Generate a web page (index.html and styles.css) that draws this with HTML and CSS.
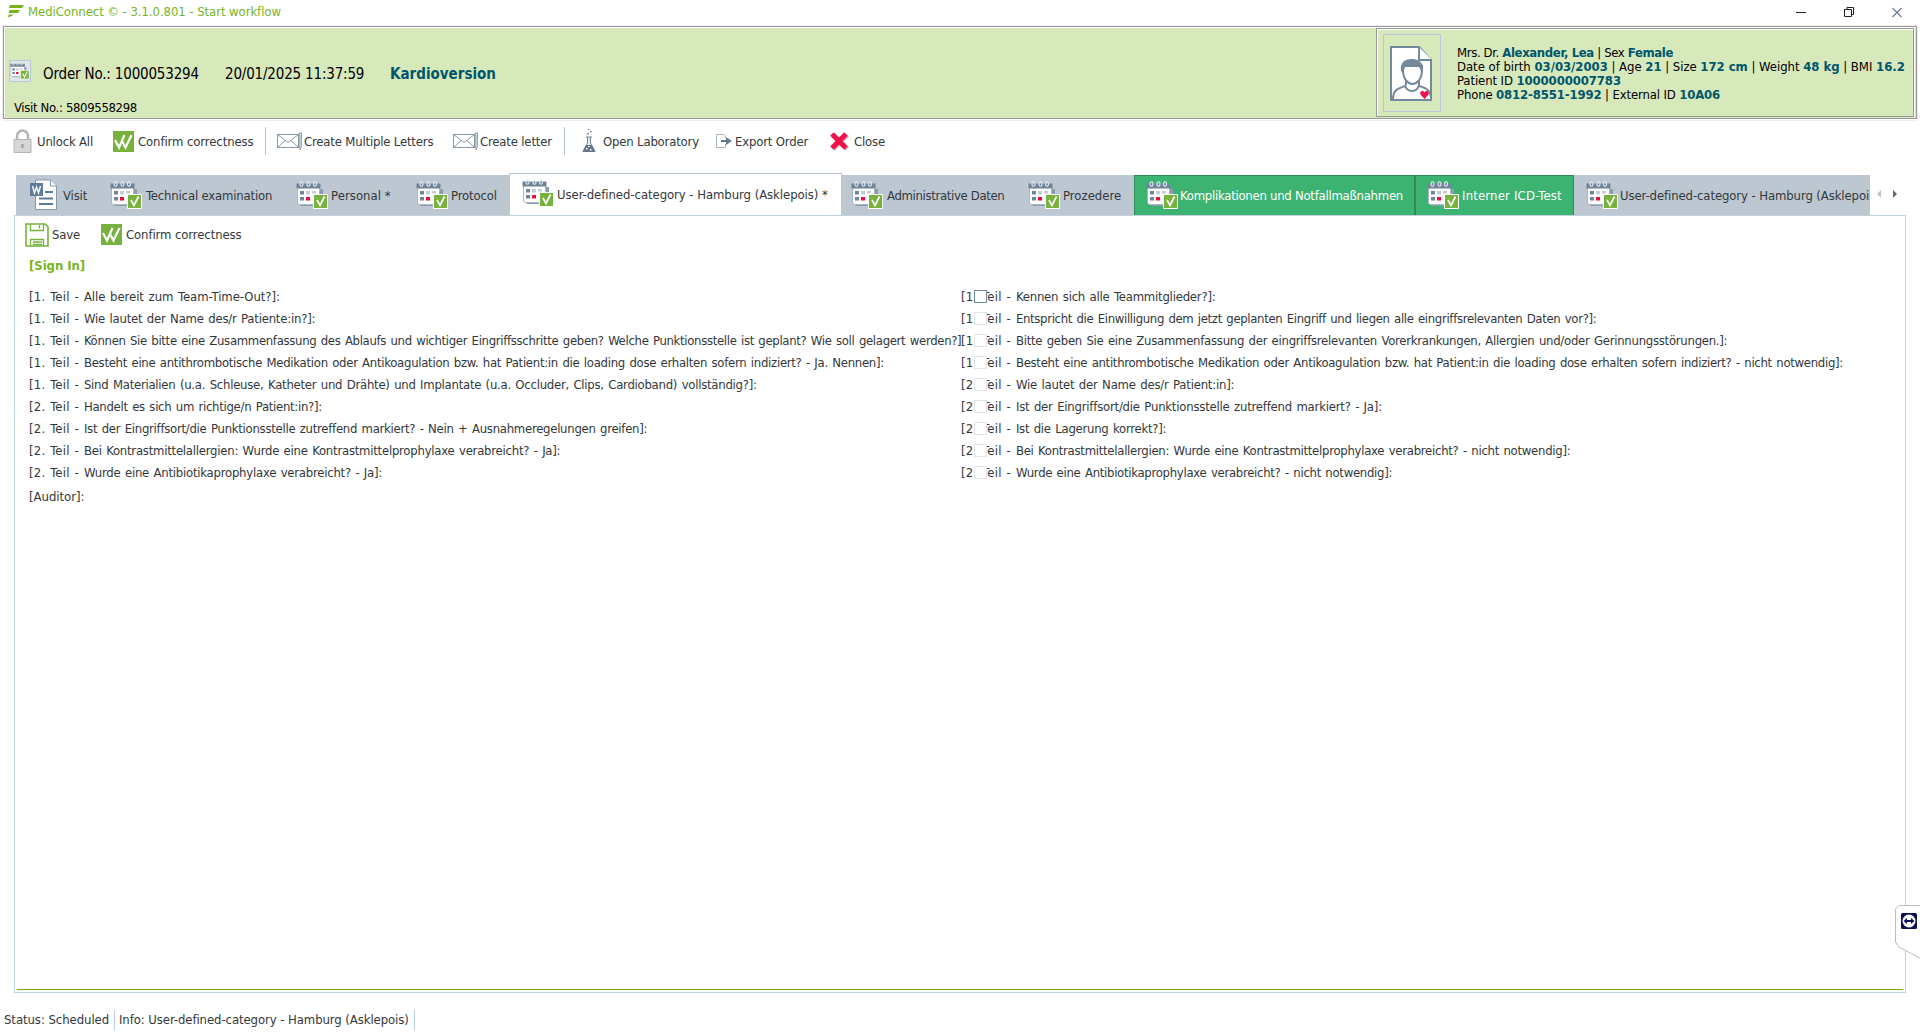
FILE: index.html
```html
<!DOCTYPE html>
<html lang="de">
<head>
<meta charset="utf-8">
<title>MediConnect</title>
<link rel="stylesheet" href="styles.css">
</head>
<body>
<svg class="defs" width="0" height="0">
  <symbol id="cal" viewBox="0 0 33 29">
    <path d="M4 8h23v14l-3 3H5l-3-3V8z" fill="#8b9cae"/>
    <path d="M1.500 5h22v17l-1.500 1.500H3L1.500 22z" fill="#fff" stroke="#a9b6c3"/>
    <path d="M.5 2.500h24v5H.5z" fill="#6f8399"/>
    <g fill="none" stroke="#e4e9ee" stroke-width="1.100"><ellipse cx="5.500" cy="3" rx="1.500" ry="2.200"/><ellipse cx="12.500" cy="3" rx="1.500" ry="2.200"/><ellipse cx="19" cy="3" rx="1.500" ry="2.200"/></g>
    <path d="M4 10h4v3.500H4zM4 16h4v3.500H4z" fill="#6f8399"/><path d="M10 10h4v3.500h-4zM16 10h4v2.500h-4z" fill="#c5ccd5"/><path d="M10 16h4v3.500h-4z" fill="#ee0a3c"/>
    <path d="M17.500 13.500h14v14h-14z" fill="#76b23c" stroke="#fff"/><path d="M21 19l3 5.500 4.500-9" fill="none" stroke="#fff" stroke-width="1.700"/>
  </symbol>
  <symbol id="ok" viewBox="0 0 21 21"><path d="M0 0h21v21H0z" fill="#76b23c"/><path d="M2 9l4 7.500L11.500 4M9 10l3.500 6.500L18.500 4" fill="none" stroke="#fff" stroke-width="2.200"/></symbol>
  <symbol id="mail" viewBox="0 0 25 19"><path d="M.5 2.500h21v13H.5zM.5 2.500l10.500 8 10.500-8M.5 15.500l7.500-7m6 0l7.500 7" fill="none" stroke="#8597a9"/><path d="M22 1h2.500v13L23.300 18 22 14z" fill="#c5d0db" stroke="#8597a9" stroke-width=".8"/></symbol>
</svg>

<header class="title">
  <svg class="logo" viewBox="0 0 16 13"><path d="M2 0h14l-2 3H1zM1.500 5H12l-2 3H.8zM.8 9.500H6L3.500 11 0 12.500z" fill="#76b41e"/></svg>
  <span class="caption">MediConnect © - 3.1.0.801 - Start workflow</span>
  <svg class="winbtns" viewBox="0 0 112 14"><path d="M3 7.500h10" stroke="#222"/><path d="M51.500 4.500h7v7h-7zM54 4.500v-2h6.500v7h-2" fill="none" stroke="#222"/><path d="M99.500 3l9 9m0-9l-9 9" stroke="#70839a" stroke-width="1.400"/></svg>
</header>

<section class="order">
  <div class="order-info">
    <div class="order-line">
      <span class="thumb"><svg viewBox="0 0 33 29"><use href="#cal"/></svg></span>
      <span class="big no">Order No.: 1000053294</span>
      <span class="big date">20/01/2025 11:37:59</span>
      <b class="kind">Kardioversion</b>
    </div>
    <div class="visit">Visit No.: 5809558298</div>
  </div>
  <div class="patient">
    <div class="photo"><svg viewBox="0 0 44 55"><path d="M1 1h28l12 13v40H1z" fill="#fff" stroke="#75899d" stroke-width="2"/><path d="M29 1v13h13" fill="#fff" stroke="#75899d" stroke-width="2"/><path d="M3 53c0-9 5-11 13-13v-5h13v5c8 2 12 5 12 13" fill="#fff" stroke="#75899d" stroke-width="2"/><path d="M15 39c2 8 12 8 14 0" fill="#fff" stroke="#75899d" stroke-width="2"/><path d="M13 24c0 9 5 14 9.500 14S32 33 32 24v-4H13z" fill="#fff" stroke="#75899d" stroke-width="2"/><path d="M11 25c-1-8 3-12 11-12s12 5 11 12l-2 3c0-4-1-6-3-8-5 1-8 1-12 0-2 2-2 5-3 8z" fill="#75899d"/><path d="M34.500 53l-4-4.500c-1.500-3 2.500-5 4-2 1.500-3 5.500-1 4 2z" fill="#f0124a"/></svg></div>
    <div class="facts">
      <div>Mrs. Dr. <b>Alexander, Lea</b> | Sex <b>Female</b></div>
      <div>Date of birth <b>03/03/2003</b> | Age <b>21</b> | Size <b>172 cm</b> | Weight <b>48 kg</b> | BMI <b>16.2</b></div>
      <div>Patient ID <b>1000000007783</b></div>
      <div>Phone <b>0812-8551-1992</b> | External ID <b>10A06</b></div>
    </div>
  </div>
</section>

<nav class="toolbar">
  <div class="tool t1"><svg width="20" height="25" viewBox="0 0 20 25"><path d="M4 11V7a5.500 5.500 0 0 1 11 0v4" fill="none" stroke="#b4b4b4" stroke-width="2.500"/><path d="M1 10.500h17v13H1z" fill="#d6d6d6" stroke="#b4b4b4"/><path d="M8.500 15h2v4h-2z" fill="#999"/></svg><span>Unlock All</span></div>
  <div class="tool t2"><svg width="21" height="21"><use href="#ok"/></svg><span>Confirm correctness</span></div>
  <i class="sep"></i>
  <div class="tool t3"><svg width="25" height="19"><use href="#mail"/></svg><span>Create Multiple Letters</span></div>
  <div class="tool t4"><svg width="25" height="19"><use href="#mail"/></svg><span>Create letter</span></div>
  <i class="sep"></i>
  <div class="tool t5"><svg width="14" height="24" viewBox="0 0 14 24"><path d="M4 8h6M5.500 8v6L1 22.500h12L8.500 14V8" fill="#e6ebf0" stroke="#75899d"/><path d="M4 16h6l3.500 7H.5z" fill="#65798e"/><path d="M4 19h1.500v1.500H4zM8 20h1.500v1.500H8zM6 17h1.500v1H6z" fill="#fff"/><path d="M5 4h2v1.500H5zM8 2h1.500v1.500H8zM6 0h1.500v1H6z" fill="#75899d"/></svg><span>Open Laboratory</span></div>
  <div class="tool t6"><svg width="16" height="14" viewBox="0 0 16 14"><path d="M9.500 4V3L7.500.5h-7v13h9V10" fill="#fff" stroke="#a7b5c2"/><path d="M5 6h5V3l6 4-6 4V8H5z" fill="#65798e"/></svg><span>Export Order</span></div>
  <div class="tool t7"><svg width="21" height="21" viewBox="0 0 21 21"><path d="M4 4l14 14M18 4L4 18" stroke="#b5b5b5" stroke-width="5"/><path d="M3 3l14 14M17 3L3 17" stroke="#f4114a" stroke-width="5"/></svg><span>Close</span></div>
</nav>

<main class="workspace">
  <div class="tabs">
    <div class="strip">
      <div class="tab w1"><svg width="28" height="32" viewBox="0 0 28 32"><path d="M5.500 1h15l6 6v23.500h-21z" fill="#fff" stroke="#8597a9"/><path d="M20.500 1v6h6" fill="#fff" stroke="#8597a9"/><path d="M15 13h8M9 19.500h14M9 25h14" stroke="#5f7b98" stroke-width="2"/><path d="M0 4h13v13H0z" fill="#5f7b98"/><path d="M2.500 7l2 7L6.500 8l2 6 2-7" fill="none" stroke="#fff" stroke-width="1.400"/></svg><span>Visit</span></div>
      <div class="tab w2"><svg class="cal"><use href="#cal"/></svg><span>Technical examination</span></div>
      <div class="tab w3"><svg class="cal"><use href="#cal"/></svg><span>Personal *</span></div>
      <div class="tab w4"><svg class="cal"><use href="#cal"/></svg><span>Protocol</span></div>
      <div class="tab active"><svg class="cal"><use href="#cal"/></svg><span>User-defined-category - Hamburg (Asklepois) *</span></div>
      <div class="tab w6"><svg class="cal"><use href="#cal"/></svg><span>Administrative Daten</span></div>
      <div class="tab w7"><svg class="cal"><use href="#cal"/></svg><span>Prozedere</span></div>
      <div class="tab w8 green"><svg class="cal"><use href="#cal"/></svg><span>Komplikationen und Notfallmaßnahmen</span></div>
      <div class="tab w9 green"><svg class="cal"><use href="#cal"/></svg><span>Interner ICD-Test</span></div>
      <div class="tab w10"><svg class="cal"><use href="#cal"/></svg><span>User-defined-category - Hamburg (Asklepois)</span></div>
    </div>
    <svg class="arrows" width="24" height="8" viewBox="0 0 24 8"><path d="M5 0v8L1 4z" fill="#c4c4c4"/><path d="M17 0v8l4-4z" fill="#666"/></svg>
  </div>
  <div class="panel">
    <div class="actions">
      <div class="tool s1"><svg width="24" height="24" viewBox="0 0 24 24"><path d="M1 1h19l3 3v19H1z" fill="#fff" stroke="#76b23c" stroke-width="1.600"/><path d="M5.500 1v6.500h13V1M14.500 2v3.500M5.500 23v-6.500h13V23" fill="none" stroke="#76b23c" stroke-width="1.300"/><path d="M8 19h9M8 21.500h9" stroke="#76b23c" stroke-width="1.500"/></svg><span>Save</span></div>
      <div class="tool s2"><svg width="21" height="21"><use href="#ok"/></svg><span>Confirm correctness</span></div>
    </div>
    <h1>[Sign In]</h1>
    <div class="form">
      <div class="col left">
        <p><span class="part">[1. Teil - </span>Alle bereit zum Team-Time-Out?]:</p>
        <p><span class="part">[1. Teil - </span>Wie lautet der Name des/r Patiente:in?]:</p>
        <p><span class="part">[1. Teil - </span>Können Sie bitte eine Zusammenfassung des Ablaufs und wichtiger Eingriffsschritte geben? Welche Punktionsstelle ist geplant? Wie soll gelagert werden?]</p>
        <p><span class="part">[1. Teil - </span>Besteht eine antithrombotische Medikation oder Antikoagulation bzw. hat Patient:in die loading dose erhalten sofern indiziert? - Ja. Nennen]:</p>
        <p><span class="part">[1. Teil - </span>Sind Materialien (u.a. Schleuse, Katheter und Drähte) und Implantate (u.a. Occluder, Clips, Cardioband) vollständig?]:</p>
        <p><span class="part">[2. Teil - </span>Handelt es sich um richtige/n Patient:in?]:</p>
        <p><span class="part">[2. Teil - </span>Ist der Eingriffsort/die Punktionsstelle zutreffend markiert? - Nein + Ausnahmeregelungen greifen]:</p>
        <p><span class="part">[2. Teil - </span>Bei Kontrastmittelallergien: Wurde eine Kontrastmittelprophylaxe verabreicht? - Ja]:</p>
        <p><span class="part">[2. Teil - </span>Wurde eine Antibiotikaprophylaxe verabreicht? - Ja]:</p>
        <p class="auditor">[Auditor]:</p>
      </div>
      <div class="col right">
        <p><span class="part">[1. Teil - </span>Kennen sich alle Teammitglieder?]:<i class="box on"></i></p>
        <p><span class="part">[1. Teil - </span>Entspricht die Einwilligung dem jetzt geplanten Eingriff und liegen alle eingriffsrelevanten Daten vor?]:<i class="box"></i></p>
        <p><span class="part">[1. Teil - </span>Bitte geben Sie eine Zusammenfassung der eingriffsrelevanten Vorerkrankungen, Allergien und/oder Gerinnungsstörungen.]:<i class="box"></i></p>
        <p><span class="part">[1. Teil - </span>Besteht eine antithrombotische Medikation oder Antikoagulation bzw. hat Patient:in die loading dose erhalten sofern indiziert? - nicht notwendig]:<i class="box"></i></p>
        <p><span class="part">[2. Teil - </span>Wie lautet der Name des/r Patient:in]:<i class="box"></i></p>
        <p><span class="part">[2. Teil - </span>Ist der Eingriffsort/die Punktionsstelle zutreffend markiert? - Ja]:<i class="box"></i></p>
        <p><span class="part">[2. Teil - </span>Ist die Lagerung korrekt?]:<i class="box"></i></p>
        <p><span class="part">[2. Teil - </span>Bei Kontrastmittelallergien: Wurde eine Kontrastmittelprophylaxe verabreicht? - nicht notwendig]:<i class="box"></i></p>
        <p><span class="part">[2. Teil - </span>Wurde eine Antibiotikaprophylaxe verabreicht? - nicht notwendig]:<i class="box"></i></p>
      </div>
    </div>
  </div>
</main>

<footer class="status"><span class="st1">Status: Scheduled</span><i></i><span class="st2">Info: User-defined-category - Hamburg (Asklepois)</span><i></i></footer>

<svg class="remote" width="25" height="54" viewBox="0 0 25 54"><path d="M25 .5H4L.5 4v33L4 42l21 11" fill="#fff" stroke="#b9bec6"/><rect x="6" y="8" width="16" height="16" rx="1.500" fill="#0a0f55"/><circle cx="14" cy="16" r="6.500" fill="#fff"/><path d="M8.500 16l3.500-3v2h4v-2l3.500 3-3.500 3v-2h-4v2z" fill="#0a0f55"/></svg>
</body>
</html>
```
FILE: styles.css
```css
* { box-sizing: border-box; }
body { margin: 0; width: 1920px; height: 1032px; overflow: hidden; position: relative; background: #fff; color: #33373b; font: 13px/16px "DejaVu Sans Condensed", "DejaVu Sans", sans-serif; display: flex; flex-direction: column; white-space: nowrap; }
svg { display: block; flex: none; }
.defs { position: absolute; }

/* Title bar */
.title { height: 25px; display: flex; align-items: center; padding: 0 15px 2px 8px; color: #76b41e; }
.caption { letter-spacing: -.06px; }
.logo { width: 16px; height: 13px; margin-right: 4px; }
.winbtns { width: 112px; height: 14px; margin-left: auto; }

/* Order header */
.order { height: 96px; margin: 0 2px; border: 1px solid #eee; flex: none; display: flex; background: #fff; color: #000; }
.order-info { flex: 1; height: 93px; padding: 33px 0 0 5px; border: 1px solid #999; border-right: 0; box-shadow: inset 1px 1px #fff; background: #d7e8bb; }
.order-line { display: flex; align-items: center; height: 22px; margin-bottom: 18px; }
.thumb { width: 22px; height: 22px; border: 1px solid #bcc6dc; background: #e0e5e6; margin-right: 12px; padding-top: 1px; }
.thumb svg { width: 20px; height: 18px; }
.big { font-size: 15px; line-height: 26px; padding-top: 5px; letter-spacing: -.18px; }
.no { width: 182px; }
.date { width: 165px; }
.kind { font-size: 15px; color: #00566b; padding-top: 5px; letter-spacing: 0; }
.visit { padding-left: 5px; letter-spacing: -.34px; }
.patient { width: 541px; height: 93px; border: 1px solid #999; border-left: 0; background: #d7e8bb; display: flex; align-items: flex-start; padding: 7px 0 0 7px; position: relative; box-shadow: inset 0 1px #fff; }
.patient::before { content: ""; position: absolute; inset: 1px 2px 1px 0; border: 1px solid #999; box-shadow: inset 1px 1px #fff, 1px 0 #fff; }
.photo { width: 58px; height: 78px; border: 1px solid #bcc6dc; padding: 11px 6px; }
.photo svg { width: 44px; height: 55px; }
.facts { padding: 12px 0 0 16px; line-height: 14px; letter-spacing: -.03px; }
.facts div:first-child { letter-spacing: -.36px; }
.facts div:nth-child(3) { letter-spacing: -.1px; }
.facts div:last-child { letter-spacing: -.14px; }
.facts b { color: #00566b; }

/* Toolbars */
.toolbar { height: 40px; display: flex; align-items: center; padding-left: 13px; flex: none; }
.tool { display: flex; align-items: center; letter-spacing: -.18px; }
.tool span { padding-top: 1px; }
.t1 { width: 100px; gap: 4px; }
.t2, .s2 { letter-spacing: -.1px; }
.t2 { width: 152px; gap: 4px; }
.sep { width: 1px; height: 28px; background: #b9c6d3; }
.t3 { width: 187px; gap: 2px; padding-left: 11px; }
.t4 { width: 111px; gap: 2px; }
.t5 { width: 151px; gap: 7px; padding-left: 17px; }
.t6 { width: 113px; gap: 3px; }
.t7 { gap: 4px; }

/* Tabs */
.workspace { height: 820px; margin: 12px 14px 0; flex: none; display: flex; flex-direction: column; }
.tabs { display: flex; height: 42px; padding-left: 2px; align-items: center; }
.strip { display: flex; align-items: flex-end; width: 1854px; height: 42px; overflow: hidden; }
.arrows { margin-left: 6px; }
.tab { display: flex; align-items: center; gap: 3px; height: 40px; background: #bdc7d2; flex: none; letter-spacing: -.15px; }
.tab span { padding-top: 2px; }
.cal { width: 33px; height: 29px; }
.w1 { width: 94px; padding-left: 14px; gap: 5px; }
.w2 { width: 186px; letter-spacing: -.17px; }
.w3 { width: 120px; gap: 2px; letter-spacing: .05px; }
.w4 { width: 93px; gap: 2px; }
.active { width: 333px; height: 42px; padding: 0 0 2px 12px; gap: 2px; background: #fff; border: 1px solid #b9c6d3; border-bottom: 0; letter-spacing: -.06px; }
.w6 { width: 177px; padding-left: 9px; letter-spacing: -.34px; }
.w7 { width: 115px; padding-left: 9px; gap: 2px; letter-spacing: 0; }
.green { background: #3cb371; color: #fff; border: 1px solid #2e8b57; border-bottom: 0; }
.tab.green span { padding-top: 0; }
.w8 { width: 281px; padding-left: 11px; gap: 1px; letter-spacing: -.26px; }
.w9 { width: 159px; padding-left: 11px; gap: 2px; letter-spacing: .18px; }
.w10 { width: 320px; padding-left: 12px; gap: 1px; letter-spacing: -.1px; }

/* Form panel */
.panel { flex: 1; border: 1px solid #c3d0dd; position: relative; width: 1892px; }
.panel::after { content: ""; position: absolute; left: 2px; right: 2px; bottom: 2px; height: 1px; background: #76a61e; }
.actions { display: flex; height: 37px; align-items: center; padding-left: 10px; }
.s1 { width: 76px; gap: 3px; }
.s2 { gap: 4px; }
h1 { font-size: 13px; line-height: 16px; margin: 5px 0 0 14px; color: #76b41e; letter-spacing: -.06px; }
.form { display: grid; grid-template-columns: 932px 1fr; padding: 12px 0 0 14px; word-spacing: 1px; }
.col p { margin: 0; height: 22px; line-height: 22px; position: relative; letter-spacing: -.22px; }
.col .part { letter-spacing: .2px; }
.left p:nth-child(1) { letter-spacing: -.055px; }
.left p:nth-child(3) { letter-spacing: -.32px; }
.left p:nth-child(4) { letter-spacing: -.282px; }
.left p:nth-child(5) { letter-spacing: -.255px; }
.left p:nth-child(6) { letter-spacing: -.287px; }
.left p:nth-child(7) { letter-spacing: -.275px; }
.left p:nth-child(8) { letter-spacing: -.24px; }
.left p:nth-child(9) { letter-spacing: -.237px; }
.right p:nth-child(2) { letter-spacing: -.33px; }
.right p:nth-child(3) { letter-spacing: -.27px; }
.right p:nth-child(4) { letter-spacing: -.298px; }
.right p:nth-child(7) { letter-spacing: -.263px; }
.right p:nth-child(8) { letter-spacing: -.275px; }
.right p:nth-child(9) { letter-spacing: -.29px; }
.col .auditor { margin-top: 2px; letter-spacing: -.03px; }
.box { position: absolute; left: 13px; top: 4px; width: 13px; height: 13px; background: #fff; border: 1px solid #e4e4e4; }
.box.on { border-color: #75899d; }

/* Status bar */
.status { display: flex; align-items: center; height: 20px; margin-top: 17px; padding-left: 4px; }
.status i { width: 1px; height: 20px; background: #b9cbdf; }
.st1 { width: 110px; letter-spacing: -.06px; }
.st2 { width: 299px; padding-left: 4px; letter-spacing: -.08px; }

/* Remote-control handle docked at the window edge */
.remote { position: absolute; right: 0; top: 905px; }
```
